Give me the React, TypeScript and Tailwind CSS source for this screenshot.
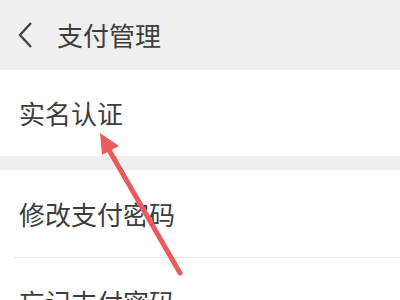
export default function App() {
  return (
    <div
      className="relative w-[400px] h-[300px] overflow-hidden bg-[#efefef] text-[#3d3d3d]"
      style={{ fontFamily: '"Noto Sans CJK SC", "Noto Sans", sans-serif' }}
    >
      {/* header */}
      <div className="h-[70px] flex items-center pl-[17px]">
        <svg width="16" height="28" viewBox="0 0 16 28" className="shrink-0">
          <path d="M14 2 L3 14 L14 26" fill="none" stroke="#444" strokeWidth="2.4" />
        </svg>
        <span className="ml-[24px] text-[26px] leading-none">支付管理</span>
      </div>

      <div className="h-[86px] bg-white flex items-center pl-[19px]">
        <span className="text-[26px] leading-none">实名认证</span>
      </div>

      <div className="h-[14px]" />

      <div className="bg-white">
        <div className="h-[88px] flex items-center pl-[6px] ml-[13px] border-b border-[#e6e6e6]">
          <span className="text-[26px] leading-none">修改支付密码</span>
        </div>
        <div className="h-[88px] flex items-center pl-[19px]">
          <span className="text-[26px] leading-none">忘记支付密码</span>
        </div>
      </div>

      {/* red annotation arrow */}
      <svg className="absolute left-0 top-0" width="400" height="300" viewBox="0 0 400 300">
        <line x1="180" y1="273" x2="109" y2="150" stroke="#ec5b5b" strokeWidth="5" strokeLinecap="round" />
        <polygon points="100,133 119,146 102,155" fill="#ec5b5b" />
      </svg>
    </div>
  )
}
